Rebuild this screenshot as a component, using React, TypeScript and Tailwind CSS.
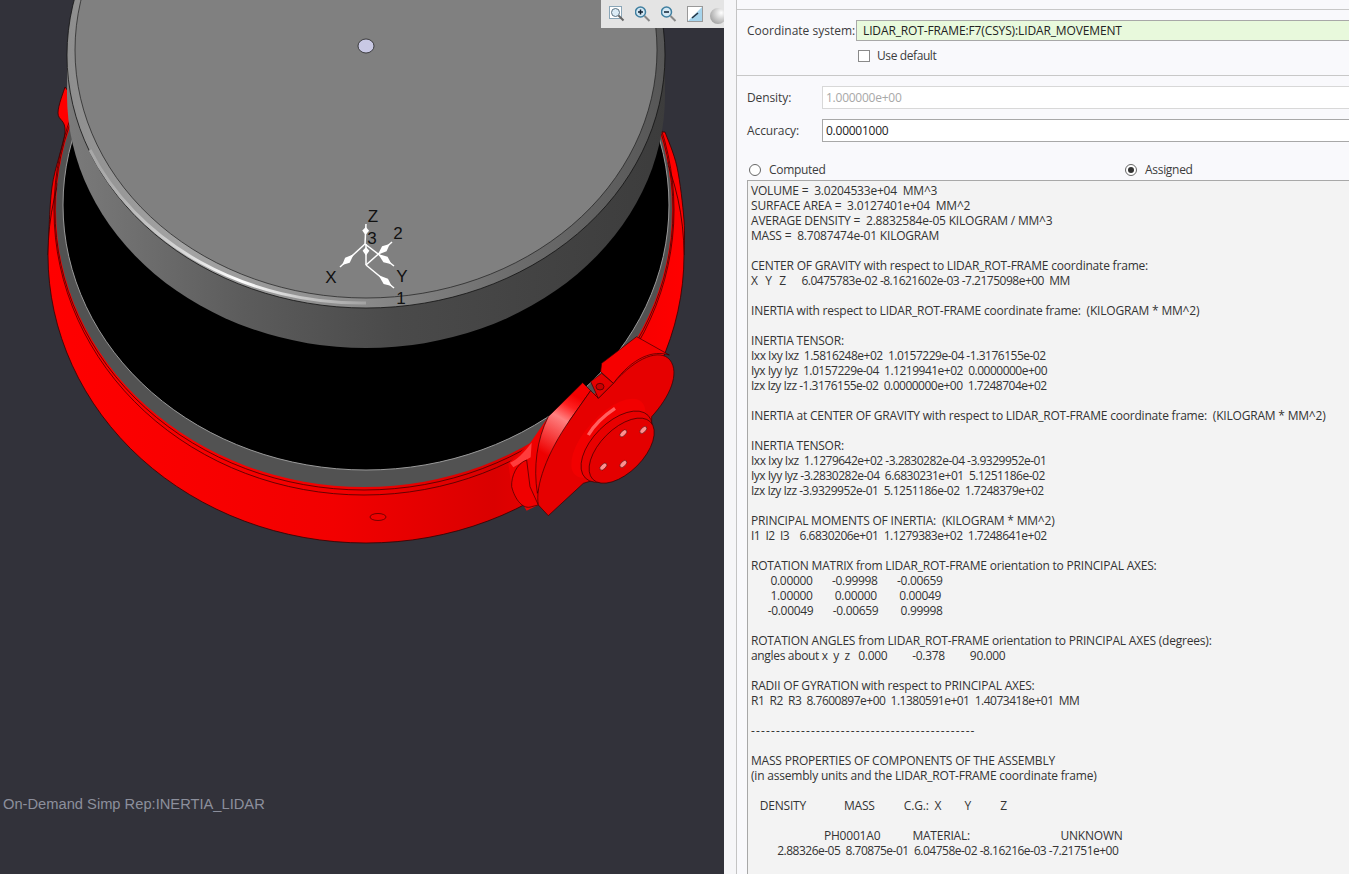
const FONT = "font-['Open_Sans',sans-serif]";

type Pt = [number, number];

// catmull-rom through traced points, used for the small band tips
function spline(pts: Pt[]) {
  let d = `M${pts[0][0]},${pts[0][1]}`;
  for (let i = 0; i < pts.length - 1; i++) {
    const p0 = pts[i - 1] ?? pts[i];
    const p1 = pts[i];
    const p2 = pts[i + 1];
    const p3 = pts[i + 2] ?? p2;
    const c1 = [p1[0] + (p2[0] - p0[0]) / 6, p1[1] + (p2[1] - p0[1]) / 6];
    const c2 = [p2[0] - (p3[0] - p1[0]) / 6, p2[1] - (p3[1] - p1[1]) / 6];
    d += ` C${c1[0].toFixed(1)},${c1[1].toFixed(1)} ${c2[0].toFixed(1)},${c2[1].toFixed(1)} ${p2[0]},${p2[1]}`;
  }
  return d;
}

const leftTip: Pt[] = [[65, 87], [58, 113], [65, 132], [52, 187], [48, 255]];
const rightTip: Pt[] = [[665, 132], [677, 167], [684, 220], [684, 255]];

function Axis({ from, to }: { from: Pt; to: Pt }) {
  const dx = to[0] - from[0];
  const dy = to[1] - from[1];
  const len = Math.hypot(dx, dy);
  const nx = -dy / len;
  const ny = dx / len;
  const a: Pt = [from[0] + dx * 0.45, from[1] + dy * 0.45];
  const b: Pt = [to[0] - (dx / len) * 3, to[1] - (dy / len) * 3];
  const mid: Pt = [a[0] + (b[0] - a[0]) * 0.55, a[1] + (b[1] - a[1]) * 0.55];
  return (
    <g>
      <line x1={from[0]} y1={from[1]} x2={to[0]} y2={to[1]} stroke="#fff" strokeWidth="1.5" />
      <polygon
        fill="#fff"
        points={`${a[0]},${a[1]} ${mid[0] + nx * 3.4},${mid[1] + ny * 3.4} ${b[0]},${b[1]} ${mid[0] - nx * 3.4},${mid[1] - ny * 3.4}`}
      />
    </g>
  );
}

function Model() {
  return (
    <svg className="absolute inset-0" width="724" height="874" viewBox="0 0 724 874">
      <defs>
        <linearGradient id="wall" gradientUnits="userSpaceOnUse" x1="60" x2="670" y1="0" y2="0">
          <stop offset="0" stopColor="#7c7c7c" />
          <stop offset="0.3" stopColor="#5c5c5c" />
          <stop offset="0.55" stopColor="#4a4a4a" />
          <stop offset="1" stopColor="#3c3c3c" />
        </linearGradient>
        <linearGradient id="rim" gradientUnits="userSpaceOnUse" x1="60" x2="670" y1="0" y2="0">
          <stop offset="0" stopColor="#8c8c8c" />
          <stop offset="0.2" stopColor="#a4a4a4" />
          <stop offset="0.5" stopColor="#8a8a8a" />
          <stop offset="0.75" stopColor="#6c6c6c" />
          <stop offset="1" stopColor="#565656" />
        </linearGradient>
        <linearGradient id="rimShine" gradientUnits="userSpaceOnUse" x1="100" x2="380" y1="0" y2="0">
          <stop offset="0" stopColor="#a8a8a8" />
          <stop offset="0.3" stopColor="#d8d8d8" />
          <stop offset="0.5" stopColor="#ffffff" />
          <stop offset="0.72" stopColor="#c8c8c8" />
          <stop offset="1" stopColor="#9a9a9a" />
        </linearGradient>
        <linearGradient id="red" gradientUnits="userSpaceOnUse" x1="48" x2="684" y1="0" y2="0">
          <stop offset="0" stopColor="#ff0000" />
          <stop offset="0.45" stopColor="#f20000" />
          <stop offset="0.7" stopColor="#da0000" />
          <stop offset="0.85" stopColor="#f00000" />
          <stop offset="1" stopColor="#ff0000" />
        </linearGradient>
        <linearGradient id="wedge" gradientUnits="userSpaceOnUse" x1="190" x2="290" y1="400" y2="230">
          <stop offset="0" stopColor="#ee0000" />
          <stop offset="0.6" stopColor="#ff8080" />
          <stop offset="0.82" stopColor="#ff2020" />
          <stop offset="1" stopColor="#f40000" />
        </linearGradient>
      </defs>

      <path d={`${spline(leftTip)} L75,255 L75,100 Z`} fill="#ff0000" stroke="#300" strokeWidth="0.8" />
      <path d={`${spline(rightTip)} L640,255 L640,132 Z`} fill="#ff0000" stroke="#300" strokeWidth="0.8" />
      <ellipse cx="366" cy="255" rx="318" ry="288" fill="url(#red)" stroke="#300" strokeWidth="0.8" />
      <ellipse cx="364" cy="210" rx="310" ry="285" fill="none" stroke="#400" strokeWidth="0.8" />
      <ellipse cx="364" cy="210" rx="309" ry="280" fill="none" stroke="#400" strokeWidth="0.8" />
      <ellipse cx="364" cy="210" rx="308" ry="277" fill="#525252" />
      <ellipse cx="366" cy="205" rx="303" ry="265" fill="#000" stroke="#9a9a9a" strokeWidth="1" />

      <ellipse cx="366" cy="95" rx="299" ry="253" fill="url(#wall)" />
      <rect x="67" y="55" width="598" height="40" fill="url(#wall)" />
      <ellipse cx="366" cy="55" rx="299" ry="253" fill="url(#rim)" stroke="#111" strokeWidth="0.8" />
      <path d="M90,150 A295,250.500 0 0 0 366,303" fill="none" stroke="url(#rimShine)" strokeWidth="3" />
      <ellipse cx="366" cy="50" rx="291" ry="248" fill="#808080" stroke="#1c1c1c" strokeWidth="0.7" />
      <ellipse cx="366" cy="46" rx="8" ry="7" fill="#c9c9e4" stroke="#222" strokeWidth="0.8" />

      <Axis from={[365, 244]} to={[366, 224]} />
      <Axis from={[365, 244]} to={[340, 267]} />
      <Axis from={[365, 244]} to={[394, 266]} />
      <Axis from={[366, 265]} to={[366, 244]} />
      <Axis from={[366, 265]} to={[392, 242]} />
      <Axis from={[366, 265]} to={[394, 288]} />
      <g fontFamily="'Liberation Sans', sans-serif" fontSize="17" fill="#111" textAnchor="middle">
        <text x="373" y="222">Z</text>
        <text x="372" y="244">3</text>
        <text x="398" y="239">2</text>
        <text x="331" y="283">X</text>
        <text x="402" y="282">Y</text>
        <text x="401" y="304">1</text>
      </g>

      {/* mount on the right of the band, traced in 3x zoom coordinates */}
      <g transform="translate(480 320) scale(0.3333)" stroke="#300" strokeWidth="2">
        <path d="M85,430 L150,370 L205,290 L175,555 L140,572 L95,500 Z" fill="#f00000" stroke="none" />
        <path d="M90,428 C110,420 130,400 155,368 L152,412 L100,442 Z" fill="#ff3c3c" stroke="none" />
        <path d="M205,290 L308,188 L332,212 L270,300 L210,420 L172,520 C160,440 170,360 205,290 Z" fill="url(#wedge)" />
        <path d="M140,420 C110,430 93,470 95,500 C105,540 130,570 155,560 L175,555 L150,500 Z" fill="#f00000" />
        <path d="M175,555 C165,500 200,400 270,300 L332,212 L355,235 L400,190 C470,110 540,85 570,120 C600,160 570,230 515,290 L515,340 L440,450 L310,490 L205,587 Z" fill="#e60000" />
        <path d="M365,130 L470,50 L568,105 C520,90 460,110 400,190 L362,155 Z" fill="#f60000" />
        <path d="M332,185 L365,160 L400,190 L355,235 Z" fill="#e40000" />
        <ellipse cx="360" cy="200" rx="12" ry="10" fill="#c80000" />
        <ellipse cx="385" cy="355" rx="148" ry="68" transform="rotate(-48 385 355)" fill="#f20000" stroke="none" />
        <path d="M325,345 C345,310 375,285 405,265" fill="none" stroke="#ff6060" strokeWidth="10" />
        <ellipse cx="410" cy="380" rx="133" ry="72" transform="rotate(-45 410 380)" fill="#e80000" />
        <ellipse cx="425" cy="392" rx="122" ry="65" transform="rotate(-45 425 392)" fill="#e40000" />
        <g fill="#ff9090" strokeWidth="1.500">
          <ellipse cx="430" cy="340" rx="13" ry="7" transform="rotate(-45 430 340)" />
          <ellipse cx="490" cy="330" rx="13" ry="7" transform="rotate(-45 490 330)" />
          <ellipse cx="370" cy="440" rx="13" ry="7" transform="rotate(-45 370 440)" />
          <ellipse cx="430" cy="432" rx="13" ry="7" transform="rotate(-45 430 432)" />
        </g>
      </g>
      <ellipse cx="378" cy="517" rx="8" ry="3.500" fill="#f00000" stroke="#400" strokeWidth="0.7" />
    </svg>
  );
}

function Toolbar() {
  return (
    <div className="absolute top-0 right-0 flex h-[28px] w-[123px] items-center gap-[10px] overflow-hidden bg-[#e4e4e4] pl-[8px]">
      <svg width="16" height="16" viewBox="0 0 16 16" className="shrink-0">
        <rect x="0.500" y="0.500" width="12" height="12" fill="#fff" stroke="#8aa6b8" />
        <circle cx="6.500" cy="6.500" r="4" fill="#dcecf6" stroke="#5a7080" />
        <path d="M9.500 9.500l5 5" stroke="#666" strokeWidth="2" />
      </svg>
      <svg width="16" height="16" viewBox="0 0 16 16" className="shrink-0">
        <circle cx="5.500" cy="6" r="5" fill="#d4e8f4" stroke="#3f7fa0" strokeWidth="1.500" />
        <path d="M3 6h5M5.500 3.500v5" stroke="#123" strokeWidth="1.500" />
        <path d="M9.500 10l5 5" stroke="#888" strokeWidth="2" />
      </svg>
      <svg width="16" height="16" viewBox="0 0 16 16" className="shrink-0">
        <circle cx="5.500" cy="6" r="5" fill="#d4e8f4" stroke="#3f7fa0" strokeWidth="1.500" />
        <path d="M3 6h5" stroke="#123" strokeWidth="1.500" />
        <path d="M9.500 10l5 5" stroke="#888" strokeWidth="2" />
      </svg>
      <svg width="16" height="16" viewBox="0 0 16 16" className="shrink-0">
        <rect x="0.500" y="0.500" width="15" height="15" fill="#a6d4ec" stroke="#999" />
        <path d="M1 15L15 1H1Z" fill="#fff" />
        <path d="M5 12l6-5" stroke="#234" strokeWidth="1.600" />
      </svg>
      <div className="-ml-[3px] h-[16px] w-[16px] shrink-0 translate-y-[2px] rounded-full bg-[radial-gradient(circle_at_70%_30%,#ffffff,#8a8a8a)]" />
    </div>
  );
}

const results = `VOLUME =  3.0204533e+04  MM^3
SURFACE AREA =  3.0127401e+04  MM^2
AVERAGE DENSITY =  2.8832584e-05 KILOGRAM / MM^3
MASS =  8.7087474e-01 KILOGRAM

CENTER OF GRAVITY with respect to LIDAR_ROT-FRAME coordinate frame:
X   Y   Z      6.0475783e-02 -8.1621602e-03 -7.2175098e+00  MM

INERTIA with respect to LIDAR_ROT-FRAME coordinate frame:  (KILOGRAM * MM^2)

INERTIA TENSOR:
Ixx Ixy Ixz  1.5816248e+02  1.0157229e-04 -1.3176155e-02
Iyx Iyy Iyz  1.0157229e-04  1.1219941e+02  0.0000000e+00
Izx Izy Izz -1.3176155e-02  0.0000000e+00  1.7248704e+02

INERTIA at CENTER OF GRAVITY with respect to LIDAR_ROT-FRAME coordinate frame:  (KILOGRAM * MM^2)

INERTIA TENSOR:
Ixx Ixy Ixz  1.1279642e+02 -3.2830282e-04 -3.9329952e-01
Iyx Iyy Iyz -3.2830282e-04  6.6830231e+01  5.1251186e-02
Izx Izy Izz -3.9329952e-01  5.1251186e-02  1.7248379e+02

PRINCIPAL MOMENTS OF INERTIA:  (KILOGRAM * MM^2)
I1  I2  I3    6.6830206e+01  1.1279383e+02  1.7248641e+02

ROTATION MATRIX from LIDAR_ROT-FRAME orientation to PRINCIPAL AXES:
       0.00000       -0.99998       -0.00659
       1.00000        0.00000        0.00049
      -0.00049       -0.00659        0.99998

ROTATION ANGLES from LIDAR_ROT-FRAME orientation to PRINCIPAL AXES (degrees):
angles about x  y  z   0.000         -0.378         90.000

RADII OF GYRATION with respect to PRINCIPAL AXES:
R1  R2  R3  8.7600897e+00  1.1380591e+01  1.4073418e+01  MM

---------------------------------------------

MASS PROPERTIES OF COMPONENTS OF THE ASSEMBLY
(in assembly units and the LIDAR_ROT-FRAME coordinate frame)

   DENSITY             MASS          C.G.:  X        Y          Z

                         PH0001A0           MATERIAL:                               UNKNOWN
          2.88326e-05  8.70875e-01  6.04758e-02 -8.16216e-03 -7.21751e+00`;

// lines that are mostly numbers sit tighter in the original font
function lineClass(l: string) {
  if (l.startsWith("---")) return "h-[15px] tracking-[1.13px]";
  if (/e[+-]\d\d\s+-?\d/.test(l)) return "h-[15px] tracking-[-0.5px]";
  if (/^\s+-?\d/.test(l) || l.startsWith("angles")) return "h-[15px] tracking-[-0.33px]";
  return "h-[15px] tracking-[-0.2px]";
}

export default function App() {
  return (
    <div className={`flex h-[874px] w-[1349px] overflow-hidden ${FONT}`}>
      <div className="relative flex w-[724px] shrink-0 flex-col justify-end bg-[#32323a] pb-[60px] pl-[3px]">
        <Model />
        <Toolbar />
        <span className="relative font-['Liberation_Sans',sans-serif] text-[14.7px] leading-[20px] text-[#8c8f9c]">
          On-Demand Simp Rep:INERTIA_LIDAR
        </span>
      </div>
      <div className="w-[12px] shrink-0 bg-[#f6f6f8]" />
      <div className="flex min-w-0 flex-1 flex-col border-l border-[#c4c4c4] bg-[#f9f9fc] text-[12px] text-[#3c3c3c]">
        <div className="h-[10px] shrink-0 border-b border-[#c8c8c8]" />
        <div className="h-[66px] shrink-0 border-b border-[#c8c8c8] pt-[10px] pl-[10px]">
          <div className="flex items-center">
            <span className="w-[109px] shrink-0 leading-[20px]">Coordinate system:</span>
            <div className="flex h-[21px] flex-1 items-center border-y border-l border-[#a8a8a8] bg-[#e8f9dc] pl-[6px] tracking-[-0.13px] text-[#222]">
              LIDAR_ROT-FRAME:F7(CSYS):LIDAR_MOVEMENT
            </div>
          </div>
          <div className="mt-[6px] flex items-center pl-[111px]">
            <span className="h-[12px] w-[12px] border border-[#8a8a8a] bg-white" />
            <span className="ml-[7px] tracking-[-0.4px]">Use default</span>
          </div>
        </div>
        <div className="flex items-center pt-[10px] pl-[10px]">
          <span className="w-[75px] shrink-0 tracking-[-0.1px]">Density:</span>
          <div className="flex h-[23px] flex-1 items-center border-y border-l border-[#d8d8d8] bg-white pl-[3px] tracking-[-0.25px] text-[#a8a8a8]">1.000000e+00</div>
        </div>
        <div className="flex items-center pt-[10px] pl-[10px]">
          <span className="w-[75px] shrink-0 tracking-[-0.1px]">Accuracy:</span>
          <div className="flex h-[23px] flex-1 items-center border-y border-l border-[#a8a8a8] bg-white pl-[3px] tracking-[-0.25px] text-[#222]">0.00001000</div>
        </div>
        <div className="flex h-[38px] shrink-0 items-end pb-[1px] pl-[12px]">
          <div className="flex w-[376px] items-center">
            <span className="h-[12px] w-[12px] rounded-full border border-[#666] bg-white" />
            <span className="ml-[8px] tracking-[-0.3px]">Computed</span>
          </div>
          <div className="flex items-center">
            <span className="flex h-[12px] w-[12px] items-center justify-center rounded-full border border-[#666] bg-white">
              <span className="h-[6px] w-[6px] rounded-full bg-[#333]" />
            </span>
            <span className="ml-[8px] tracking-[-0.3px]">Assigned</span>
          </div>
        </div>
        <div className="ml-[10px] flex-1 overflow-hidden border-t border-l border-[#a8a8a8] bg-[#f3f3f3] pt-[2px] pl-[3px]">
          <pre className={`${FONT} text-[12px] leading-[15px] text-[#333]`}>
            {results.split("\n").map((l, i) => (
              <div key={i} className={lineClass(l)}>{l}</div>
            ))}
          </pre>
        </div>
      </div>
    </div>
  );
}
